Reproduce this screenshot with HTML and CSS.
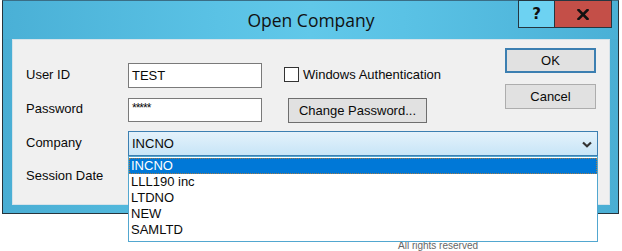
FILE: index.html
```html
<!DOCTYPE html>
<html>
<head>
<meta charset="utf-8">
<link rel="stylesheet" href="styles.css">
</head>
<body>
<div class="page">
  <div class="window">
    <div class="titlebar">
      <div class="tb-spacer"></div>
      <div class="title">Open Company</div>
      <div class="caption-btns">
        <div class="cap-btn help">?</div>
        <div class="cap-btn close">
          <svg width="12" height="11" viewBox="0 0 12 11"><path d="M1.5 1 L10.5 10 M10.5 1 L1.5 10" stroke="#111" stroke-width="2.6" stroke-linecap="square"/></svg>
        </div>
      </div>
    </div>
    <div class="client">
      <div class="label r1">User ID</div>
      <div class="field r1">TEST</div>
      <label class="check r1"><span class="box"></span>Windows Authentication</label>
      <div class="side-btns">
        <div class="btn default">OK</div>
        <div class="btn">Cancel</div>
      </div>

      <div class="label r2">Password</div>
      <div class="field r2 pw">*****</div>
      <div class="btn change r2">Change Password...</div>

      <div class="label r3">Company</div>
      <div class="combo r3">
        <span class="combo-text">INCNO</span>
        <svg class="chev" width="10" height="7" viewBox="0 0 10 7"><path d="M1 1.5 L5 5.2 L9 1.5" fill="none" stroke="#333" stroke-width="2.2"/></svg>
        <div class="dropdown">
          <div class="opt sel">INCNO</div>
          <div class="opt">LLL190 inc</div>
          <div class="opt">LTDNO</div>
          <div class="opt">NEW</div>
          <div class="opt">SAMLTD</div>
        </div>
      </div>

      <div class="label r4">Session Date</div>
    </div>
  </div>
  <div class="footer">All rights reserved</div>
</div>
</body>
</html>
```

FILE: styles.css
```css
html, body {
  margin: 0;
  padding: 0;
  background: #ffffff;
}
body {
  width: 622px;
  height: 251px;
  overflow: hidden;
  font-family: "Liberation Sans", Arial, sans-serif;
  font-size: 13px;
  color: #0a0a0a;
}
.page {
  padding-left: 2px;
  position: relative;
}
.window {
  border: 1px solid #27343c;
  border-top-color: #3a6e86;
  background: linear-gradient(90deg, #4aaed4 0%, #55bde0 30%, #5cc4e6 50%, #55bde0 70%, #4aaed4 100%);
  padding: 0 8px 8px 9px;
  box-sizing: border-box;
  width: 617px;
}
.titlebar {
  height: 38px;
  display: grid;
  grid-template-columns: 1fr auto 1fr;
  margin: 0 -8px 0 -9px;
  background: linear-gradient(90deg, #4ab0d6 0%, #5ac2e5 35%, #61c8e9 50%, #5ac2e5 65%, #4ab0d6 100%);
}
.title {
  font-family: "Open Sans", "Noto Sans", sans-serif;
  font-size: 17.5px;
  color: #111;
  line-height: 38px;
  padding-left: 1px;
}
.caption-btns {
  display: flex;
  justify-self: end;
  align-self: start;
  margin-right: 6px;
  margin-top: -1px;
}
.cap-btn {
  height: 28px;
  box-sizing: border-box;
  border: 1px solid #253640;
  display: flex;
  align-items: center;
  justify-content: center;
}
.help {
  width: 36px;
  background: #6dd2f2;
  border-right: none;
  font-family: "DejaVu Sans", sans-serif;
  font-weight: bold;
  font-size: 15px;
  color: #111;
}
.close {
  width: 58px;
  background: #c44f48;
}
.client {
  background: #f0f0f0;
  border: 1px solid #d6e3ea;
  height: 166px;
  box-sizing: border-box;
  display: grid;
  grid-template-columns: 102px 134px 243px 93px;
  grid-template-rows: 40px 35px 33px 31px;
  padding: 8px 8px 0 13px;
}
.label {
  grid-column: 1;
  align-self: end;
  line-height: 25px;
  height: 25px;
  margin-bottom: 1px;
}
.label.r2 { margin-bottom: 2px; }
.r1 { grid-row: 1; }
.r2 { grid-row: 2; }
.r3 { grid-row: 3; }
.r4 { grid-row: 4; }
.label.r4 { height: 21px; line-height: 21px; }
.field {
  grid-column: 2;
  align-self: end;
  height: 25px;
  box-sizing: border-box;
  background: #ffffff;
  border: 1px solid #7a7a7a;
  padding-left: 3px;
  line-height: 23px;
}
.field.pw {
  height: 24px;
  line-height: 19px;
  font-size: 12px;
  letter-spacing: -1px;
  margin-bottom: 1px;
}
.check {
  grid-column: 3;
  align-self: end;
  display: flex;
  align-items: center;
  height: 25px;
  margin-left: 22px;
  margin-bottom: 1px;
}
.box {
  width: 15px;
  height: 15px;
  box-sizing: border-box;
  border: 1px solid #333;
  background: #fff;
  margin-right: 4px;
}
.side-btns {
  grid-column: 4;
  grid-row: 1 / span 2;
  display: flex;
  flex-direction: column;
  gap: 11px;
  align-self: start;
}
.btn {
  width: 91px;
  height: 25px;
  box-sizing: border-box;
  background: #e1e1e1;
  border: 1px solid #adadad;
  display: flex;
  align-items: center;
  justify-content: center;
}
.btn.default {
  border: 2px solid #3c7fb1;
}
.btn.change {
  grid-column: 3;
  align-self: end;
  width: 139px;
  margin-left: 26px;
  border-color: #6e6e6e;
}
.combo {
  grid-column: 2 / span 3;
  align-self: end;
  position: relative;
  height: 25px;
  box-sizing: border-box;
  background: linear-gradient(#e4f2fb, #c7e5f7);
  border: 1px solid #3c7fb1;
  display: flex;
  align-items: center;
  justify-content: space-between;
  padding: 0 5px 0 3px;
}
.chev {
  margin-top: 1px;
}
.dropdown {
  position: absolute;
  left: -1px;
  top: 24px;
  width: 470px;
  height: 86px;
  box-sizing: border-box;
  background: #ffffff;
  border: 1px solid #52a7d0;
  padding-top: 1px;
  z-index: 5;
}
.opt {
  height: 16px;
  line-height: 16px;
  padding-left: 2px;
  color: #0a0a0a;
}
.opt.sel {
  background: #0078d7;
  color: #ffffff;
  outline: 1px dotted #a07a4a;
  outline-offset: -1px;
}
.footer {
  position: absolute;
  left: 398px;
  top: 240px;
  font-size: 10px;
  line-height: 11px;
  color: #666;
}
```
